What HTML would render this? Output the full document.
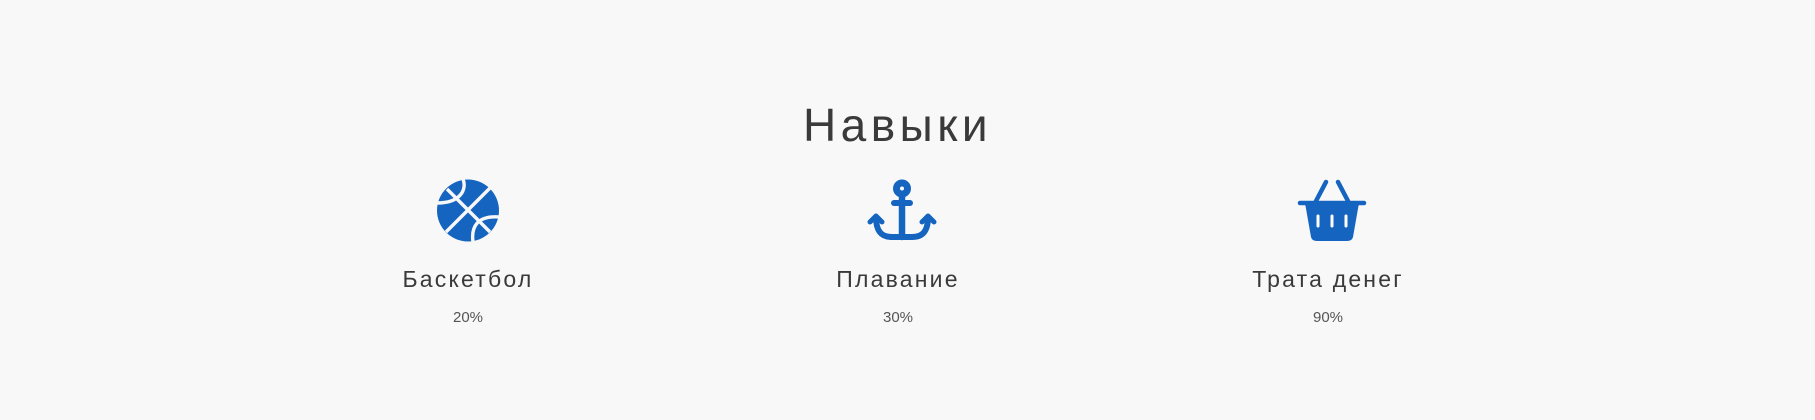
<!DOCTYPE html>
<html><head><meta charset="utf-8"><style>
html,body{margin:0;padding:0;background:#f8f8f8;width:1815px;height:420px;overflow:hidden;font-family:"Liberation Sans",sans-serif;}
.t{position:absolute;left:-12px;width:1815px;text-align:center;top:100px;font-size:46px;color:#3a3a3a;line-height:50px;letter-spacing:4.5px;text-indent:4px;}
.col{position:absolute;width:300px;text-align:center;}
.col svg{position:absolute;left:119px;top:179px;}
.lab{position:absolute;left:0;width:300px;top:264px;font-size:23px;line-height:30px;color:#3a3a3a;letter-spacing:2.2px;text-indent:0;}
.pct{position:absolute;left:0;width:300px;top:308px;font-size:15px;line-height:20px;color:#555;}
</style></head><body>
<div class="t">Навыки</div>

<div class="col" style="left:318px;top:0">
<svg width="62" height="63" viewBox="0 0 62 63">
<circle cx="31" cy="31.5" r="31" fill="#1565c0"/>
<g stroke="#f8f8f8" stroke-width="3.4" fill="none">
<line x1="53" y1="9" x2="9" y2="53"/>
<line x1="10" y1="10" x2="53" y2="53"/>
<path d="M26 0 C30 10 24 24 0 24"/>
<path d="M63 38 C40 36 34 48 36 63"/>
</g>
</svg>
<div class="lab">Баскетбол</div><div class="pct">20%</div>
</div>

<div class="col" style="left:748px;top:0">
<svg width="70" height="63" viewBox="0 0 70 63">
<g fill="none" stroke="#1565c0" stroke-linecap="round" stroke-linejoin="round">
<circle cx="35" cy="9.5" r="5.5" stroke-width="7"/>
<line x1="27" y1="24" x2="43" y2="24" stroke-width="6"/>
<line x1="35" y1="15" x2="35" y2="58" stroke-width="6.5"/>
<path d="M9 38 C9 52 14 58 25 58 L45 58 C56 58 61 52 61 38" stroke-width="6"/>
<path d="M3 43 L9 37 L15 43" stroke-width="5"/>
<path d="M55 43 L61 37 L67 43" stroke-width="5"/>
</g>
</svg>
<div class="lab">Плавание</div><div class="pct">30%</div>
</div>

<div class="col" style="left:1178px;top:0">
<svg width="70" height="63" viewBox="0 0 70 63">
<g stroke="#1565c0" stroke-linecap="round" fill="none" stroke-width="4.5">
<line x1="29" y1="3" x2="19" y2="22"/>
<line x1="41" y1="3" x2="51" y2="22"/>
<line x1="3" y1="24" x2="67" y2="24"/>
</g>
<path d="M8 24 L62 24 L56 58 Q55 62 50 62 L20 62 Q15 62 14 58 Z" fill="#1565c0"/>
<g stroke="#fff" stroke-width="3" stroke-linecap="round">
<line x1="21" y1="37" x2="21" y2="47"/>
<line x1="35" y1="37" x2="35" y2="47"/>
<line x1="49" y1="37" x2="49" y2="47"/>
</g>
</svg>
<div class="lab">Трата денег</div><div class="pct">90%</div>
</div>
</body></html>
